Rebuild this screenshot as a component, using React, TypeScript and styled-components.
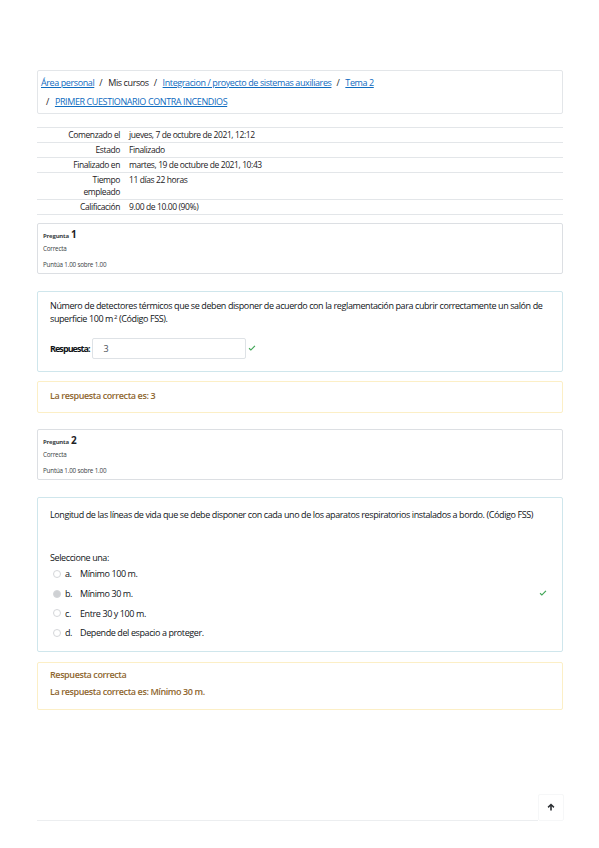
import styled, { createGlobalStyle } from "styled-components";

const GlobalStyle = createGlobalStyle`
  body {
    margin: 0;
    background: #ffffff;
    font-family: "Open Sans", "Liberation Sans", sans-serif;
    color: #1d2125;
  }
`;

const COLORS = {
  TEXT: "#1d2125",
  LINK: "#0f6cbf",
  BORDER: "#e3e6e9",
  INFO_BORDER: "#dcdfe3",
  FORM_BORDER: "#cfe6ec",
  OUTCOME_BORDER: "#fcefc6",
  OUTCOME_TEXT: "#8e662e",
  CHECK: "#3fa555"
};

const summary = [
  { label: "Comenzado el", value: "jueves, 7 de octubre de 2021, 12:12" },
  { label: "Estado", value: "Finalizado" },
  { label: "Finalizado en", value: "martes, 19 de octubre de 2021, 10:43" },
  { label: "Tiempo empleado", value: "11 días 22 horas" },
  { label: "Calificación", value: "9.00 de 10.00 (90%)" }
];

const options = [
  { letter: "a.", text: "Mínimo 100 m.", checked: false },
  { letter: "b.", text: "Mínimo 30 m.", checked: true },
  { letter: "c.", text: "Entre 30 y 100 m.", checked: false },
  { letter: "d.", text: "Depende del espacio a proteger.", checked: false }
];

const Check = () => (
  <CheckIcon viewBox="0 0 10 8" width={8} height={7}>
    <path d="M0.8 4.2 L3.6 6.9 L9.2 1.1 L8.1 0.2 L3.6 4.8 L1.9 3.1 Z" fill={COLORS.CHECK} />
  </CheckIcon>
);

const QuestionInfo = ({ num, spaced }: { num: number; spaced?: boolean }) => (
  <InfoBox spaced={spaced}>
    <InfoTitle>
      Pregunta <InfoNum>{num}</InfoNum>
    </InfoTitle>
    <InfoLine>Correcta</InfoLine>
    <InfoLine>Puntúa 1.00 sobre 1.00</InfoLine>
  </InfoBox>
);

const App = () => {
  return (
    <>
      <GlobalStyle />
      <Page>
        <Breadcrumb>
          <Crumb>
            <CrumbLink>Área personal</CrumbLink>
          </Crumb>
          <Crumb withSep>Mis cursos</Crumb>
          <Crumb withSep>
            <CrumbLink>Integracion / proyecto de sistemas auxiliares</CrumbLink>
          </Crumb>
          <Crumb withSep>
            <CrumbLink>Tema 2</CrumbLink>
          </Crumb>
          <Crumb withSep>
            <CrumbLink>PRIMER CUESTIONARIO CONTRA INCENDIOS</CrumbLink>
          </Crumb>
        </Breadcrumb>

        <SummaryTable>
          {summary.map(({ label, value }) => (
            <SummaryRow key={label}>
              <SummaryLabel>{label}</SummaryLabel>
              <SummaryValue>{value}</SummaryValue>
            </SummaryRow>
          ))}
        </SummaryTable>

        <QuestionInfo num={1} />
        <Formulation>
          <QText>
            Número de detectores térmicos que se deben disponer de acuerdo con la reglamentación para
            cubrir correctamente un salón de superficie 100 m<Sup>2</Sup> (Código FSS).
          </QText>
          <AnswerRow>
            <AnswerLabel>Respuesta:</AnswerLabel>
            <AnswerInput>3</AnswerInput>
            <Check />
          </AnswerRow>
        </Formulation>
        <Outcome>
          <OutcomeLine>La respuesta correcta es: 3</OutcomeLine>
        </Outcome>

        <QuestionInfo num={2} spaced />
        <Formulation tall>
          <QText>
            Longitud de las líneas de vida que se debe disponer con cada uno de los aparatos
            respiratorios instalados a bordo. (Código FSS)
          </QText>
          <Prompt>Seleccione una:</Prompt>
          <OptionList>
            {options.map(({ letter, text, checked }) => (
              <Option key={letter}>
                <Radio checked={checked} />
                <OptionLetter>{letter}</OptionLetter>
                <OptionText>{text}</OptionText>
                {checked && <Check />}
              </Option>
            ))}
          </OptionList>
        </Formulation>
        <Outcome tall>
          <OutcomeLine>Respuesta correcta</OutcomeLine>
          <OutcomeLine>La respuesta correcta es: Mínimo 30 m.</OutcomeLine>
        </Outcome>

        <Footer>
          <FooterLine />
          <TopButton>
            <svg viewBox="0 0 10 10" width={8} height={8}>
              <path d="M5 0.5 L9.3 4.8 L7.9 6.1 L6 4.2 L6 9.5 L4 9.5 L4 4.2 L2.1 6.1 L0.7 4.8 Z" fill="#2b2f33" />
            </svg>
          </TopButton>
        </Footer>
      </Page>
    </>
  );
};

const Page = styled.div`
  width: 526px;
  padding: 70px 36px 0 37px;
  display: flex;
  flex-direction: column;
  font-size: 9px;
  letter-spacing: -0.4px;
`;

const Breadcrumb = styled.ol`
  margin: 0;
  list-style: none;
  border: 1px solid ${COLORS.BORDER};
  border-radius: 2px;
  padding: 2px 3px;
  display: flex;
  flex-wrap: wrap;
  line-height: 19px;
  font-size: 9px;
  color: ${COLORS.TEXT};
`;

const Crumb = styled.li<{ withSep?: boolean }>`
  display: flex;
  &::before {
    content: ${({ withSep }) => (withSep ? '"/"' : "none")};
    padding: 0 6px 0 5px;
    color: ${COLORS.TEXT};
  }
`;

const CrumbLink = styled.a`
  color: ${COLORS.LINK};
  text-decoration: underline;
`;

const SummaryTable = styled.div`
  margin-top: 13px;
  display: flex;
  flex-direction: column;
  border-bottom: 1px solid ${COLORS.BORDER};
`;

const SummaryRow = styled.div`
  display: grid;
  grid-template-columns: 88px 1fr;
  border-top: 1px solid ${COLORS.BORDER};
  font-size: 8.5px;
  line-height: 12px;
  padding: 1px 0 1px;
`;

const SummaryLabel = styled.div`
  text-align: right;
  padding: 0 5px 0 22px;
`;

const SummaryValue = styled.div`
  padding-left: 4px;
`;

const InfoBox = styled.div<{ spaced?: boolean }>`
  margin-top: ${({ spaced }) => (spaced ? "16px" : "8px")};
  border: 1px solid ${COLORS.INFO_BORDER};
  border-radius: 2px;
  padding: 1px 5px 0;
  display: flex;
  flex-direction: column;
  color: #3a3f44;
  letter-spacing: -0.2px;
`;

const InfoTitle = styled.div`
  font-size: 6px;
  font-weight: 700;
  height: 16px;
  display: flex;
  align-items: baseline;
  gap: 2px;
  line-height: 18px;
`;

const InfoNum = styled.span`
  font-size: 10px;
  color: ${COLORS.TEXT};
`;

const InfoLine = styled.div`
  font-size: 6.3px;
  line-height: 16px;
`;

const Formulation = styled.div<{ tall?: boolean }>`
  margin-top: 17px;
  border: 1px solid ${COLORS.FORM_BORDER};
  border-radius: 2px;
  padding: ${({ tall }) => (tall ? "10px 12px 8px" : "7px 12px 12px")};
  display: flex;
  flex-direction: column;
  color: #101418;
`;

const QText = styled.div`
  line-height: 13px;
  font-size: 9px;
`;

const Sup = styled.span`
  font-size: 6px;
  vertical-align: 3px;
  line-height: 0;
  margin-left: 1px;
`;

const AnswerRow = styled.div`
  margin-top: 13px;
  display: flex;
  align-items: center;
  gap: 2px;
`;

const AnswerLabel = styled.span`
  font-weight: 700;
  letter-spacing: -0.95px;
`;

const AnswerInput = styled.div`
  width: 141px;
  height: 19px;
  border: 1px solid #dee2e6;
  border-radius: 2px;
  padding-left: 11px;
  display: flex;
  align-items: center;
  color: #495057;
`;

const CheckIcon = styled.svg`
  flex-shrink: 0;
`;

const Prompt = styled.div`
  margin-top: 30px;
  line-height: 13px;
`;

const OptionList = styled.div`
  display: flex;
  flex-direction: column;
  padding-left: 3px;
`;

const Option = styled.div`
  display: flex;
  align-items: center;
  height: 19.7px;
  padding-right: 3px;
`;

const Radio = styled.span<{ checked: boolean }>`
  width: 6px;
  height: 6px;
  border-radius: 50%;
  border: 1px solid #d4d6d9;
  background: ${({ checked }) => (checked ? "#cfd1d4" : "#ffffff")};
  margin-right: 4px;
`;

const OptionLetter = styled.span`
  width: 15px;
`;

const OptionText = styled.span`
  flex: 1;
`;

const Outcome = styled.div<{ tall?: boolean }>`
  margin-top: ${({ tall }) => (tall ? "10px" : "9px")};
  border: 1px solid ${COLORS.OUTCOME_BORDER};
  border-radius: 2px;
  padding: ${({ tall }) => (tall ? "3px 12px 9px" : "5px 12px 8px")};
  display: flex;
  flex-direction: column;
  color: ${COLORS.OUTCOME_TEXT};
`;

const OutcomeLine = styled.div`
  line-height: 17px;
  font-weight: 600;
`;

const Footer = styled.div`
  margin-top: 84px;
  display: flex;
  align-items: flex-end;
`;

const FooterLine = styled.div`
  flex: 1;
  border-bottom: 1px solid #eceef0;
  height: 24px;
`;

const TopButton = styled.div`
  width: 24px;
  height: 25px;
  display: flex;
  align-items: center;
  justify-content: center;
  border: 1px solid #f6f7f8;
  border-radius: 2px;
  margin-right: -1px;
`;

export default App;
